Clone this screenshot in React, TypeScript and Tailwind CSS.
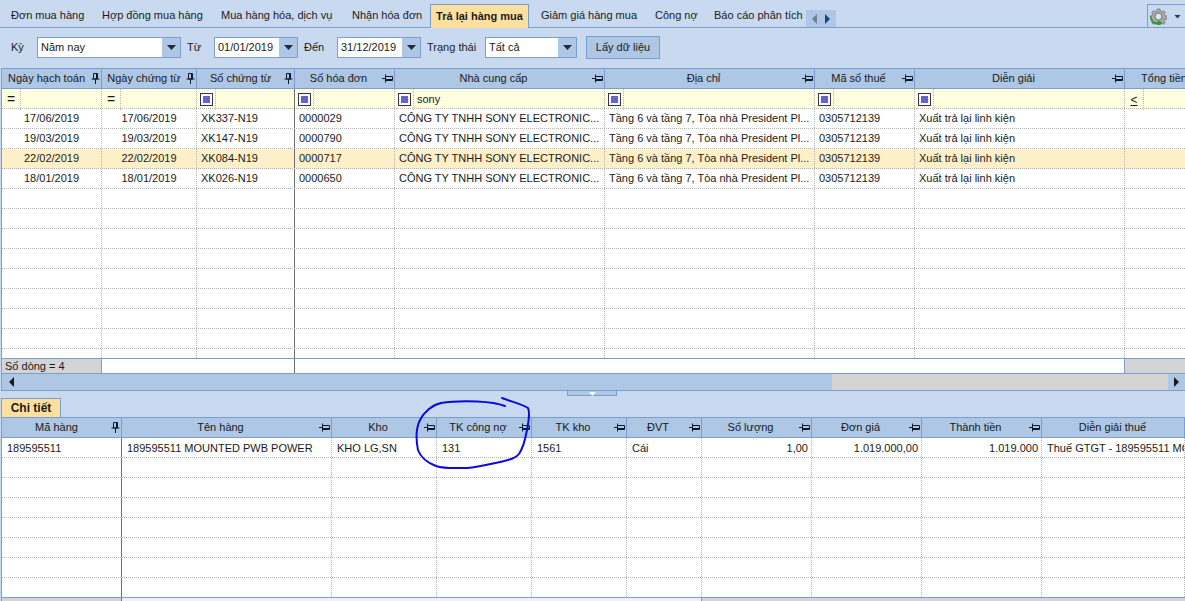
const topCols = [
  { title: "Ngày hạch toán", pin: "v", filter: "=" },
  { title: "Ngày chứng từ", pin: "v", filter: "=" },
  { title: "Số chứng từ", pin: "v", filter: "box" },
  { title: "Số hóa đơn", pin: "h", filter: "box" },
  { title: "Nhà cung cấp", pin: "h", filter: "box", value: "sony" },
  { title: "Địa chỉ", pin: "h", filter: "box" },
  { title: "Mã số thuế", pin: "h", filter: "box" },
  { title: "Diễn giải", pin: "h", filter: "box" },
  { title: "Tổng tiền", pin: "", filter: "le" },
];

const topRows = [
  ["17/06/2019", "17/06/2019", "XK337-N19", "0000029"],
  ["19/03/2019", "19/03/2019", "XK147-N19", "0000790"],
  ["22/02/2019", "22/02/2019", "XK084-N19", "0000717"],
  ["18/01/2019", "18/01/2019", "XK026-N19", "0000650"],
];

const bottomCols = [
  { title: "Mã hàng", pin: "v" },
  { title: "Tên hàng", pin: "h" },
  { title: "Kho", pin: "h" },
  { title: "TK công nợ", pin: "h" },
  { title: "TK kho", pin: "h" },
  { title: "ĐVT", pin: "h" },
  { title: "Số lượng", pin: "h" },
  { title: "Đơn giá", pin: "h" },
  { title: "Thành tiền", pin: "h" },
  { title: "Diễn giải thuế", pin: "" },
];

const bottomRow = [
  "189595511",
  "189595511 MOUNTED PWB POWER",
  "KHO LG,SN",
  "131",
  "1561",
  "Cái",
  "1,00",
  "1.019.000,00",
  "1.019.000",
  "Thuế GTGT - 189595511 MOUNTED PWB POWER",
];

const topGrid = "grid grid-cols-[100px_95px_98px_100px_210px_210px_100px_210px_80px] w-[1223px]";
const bottomGrid = "grid grid-cols-[120px_210px_105px_95px_95px_75px_110px_110px_120px_143px] w-[1183px]";

const Pin = ({ dir }: { dir: string }) => {
  if (dir === "v") {
    return (
      <svg width="9" height="11" viewBox="0 0 9 11" className="shrink-0 text-[#10182c]">
        <path d="M2.500 .5h4v5.500h-4zM.5 6h8M4.500 6v5M5.500 .5v5.500" fill="none" stroke="currentColor" />
      </svg>
    );
  }
  if (dir === "h") {
    return (
      <svg width="11" height="9" viewBox="0 0 11 9" className="shrink-0 text-[#10182c]">
        <path d="M3.500 2.500h7v4h-7zM3.500 .5v8M3.500 4.500h-3.500M3.500 5.500h7" fill="none" stroke="currentColor" />
      </svg>
    );
  }
  return null;
};

const Arrow = ({ dir, className }: { dir: string; className: string }) => (
  <svg width="7" height="10" viewBox="0 0 7 10" className={className}>
    <path d={dir === "left" ? "M6 0v10L1 5z" : "M1 0v10l5-5z"} fill="currentColor" />
  </svg>
);

const Caret = ({ className }: { className: string }) => (
  <svg width="9" height="5" viewBox="0 0 9 5" className={className}>
    <path d="M0 0h9L4.500 5z" fill="currentColor" />
  </svg>
);

const Combo = ({ value, className }: { value: string; className: string }) => (
  <div className={`flex h-[21px] border border-[#7a9fcf] bg-white ${className}`}>
    <div className="flex-1 pl-[3px] leading-[18px] overflow-hidden whitespace-nowrap">{value}</div>
    <div className="w-[18px] bg-[#adc7e5] flex items-center justify-center">
      <Caret className="text-[#1c2a44]" />
    </div>
  </div>
);

const HeaderCell = ({ title, pin }: { title: string; pin: string }) => (
  <div className="flex items-center h-full pr-[1px] border-r border-[#7a9fcf]">
    <span className="flex-1 text-center whitespace-nowrap overflow-hidden">{title}</span>
    <Pin dir={pin} />
  </div>
);

const FilterIcon = ({ kind }: { kind: string }) => {
  const box = "flex items-center justify-center w-[19px] h-full border-r border-dotted border-[#b5b5b5]";
  if (kind === "=") return <span className={`${box} text-[14px]`}>=</span>;
  if (kind === "le") return <span className={`${box} text-[12px] underline`}>&lt;</span>;
  return (
    <span className={box}>
      <span className="w-[13px] h-[13px] border border-[#33335f] bg-white flex items-center justify-center">
        <span className="w-[7px] h-[7px] bg-[#6464cc]" />
      </span>
    </span>
  );
};

const TopRow = ({ cells, hot }: { cells?: string[]; hot?: boolean }) => (
  <div className={`${topGrid} h-[20px] border-b border-dotted border-[#b5b5b5] ${hot ? "bg-[#fdf0c9]" : "bg-white"}`}>
    {topCols.map((c, i) => {
      let text = "";
      if (cells) {
        if (i < 4) text = cells[i];
        if (i === 4) text = "CÔNG TY TNHH SONY ELECTRONIC...";
        if (i === 5) text = "Tầng 6 và tầng 7, Tòa nhà President Pl...";
        if (i === 6) text = "0305712139";
        if (i === 7) text = "Xuất trả lại linh kiện";
      }
      return (
        <div
          key={c.title}
          className={`border-r ${i === 2 ? "border-solid border-[#6f6f6f]" : "border-dotted border-[#b5b5b5]"} leading-[19px] whitespace-nowrap overflow-hidden ${i < 2 ? "text-center" : "pl-[4px]"}`}
        >
          {text}
        </div>
      );
    })}
  </div>
);

const BottomRow = ({ filled }: { filled?: boolean }) => (
  <div className={`${bottomGrid} h-[20px] border-b border-dotted border-[#b5b5b5] bg-white`}>
    {bottomRow.map((text, i) => (
      <div
        key={i}
        className={`border-r ${i === 0 ? "border-solid border-[#6f6f6f]" : "border-dotted border-[#b5b5b5]"} leading-[20px] whitespace-nowrap overflow-hidden ${i >= 6 && i <= 8 ? "text-right pr-[3px]" : "pl-[5px]"}`}
      >
        {filled ? text : ""}
      </div>
    ))}
  </div>
);

export default function App() {
  return (
    <div className="relative w-[1185px] h-[601px] overflow-hidden bg-[#c9daf0] text-[11px] text-[#1a1a1a] font-['Liberation_Sans',sans-serif]">
      {/* tab strip */}
      <div className="flex items-end h-[28px] border-b border-[#7a9fcf]">
        <div className="flex items-center h-[23px] pl-[11px] whitespace-nowrap">
          <span className="w-[91px]">Đơn mua hàng</span>
          <span className="w-[119px]">Hợp đồng mua hàng</span>
          <span className="w-[131px]">Mua hàng hóa, dịch vụ</span>
          <span className="w-[78px]">Nhận hóa đơn</span>
          <span className="flex items-center justify-center w-[99px] h-[24px] -mb-px border border-b-0 border-[#7a9fcf] bg-[#fddf9e] font-bold">
            Trả lại hàng mua
          </span>
          <span className="w-[126px] pl-[12px]">Giảm giá hàng mua</span>
          <span className="w-[59px]">Công nợ</span>
          <span className="w-[92px]">Báo cáo phân tích</span>
        </div>
        <div className="flex items-center justify-around w-[30px] h-[17px] bg-[#adc7e5] px-[2px]">
          <Arrow dir="left" className="text-[#6f7f94]" />
          <Arrow dir="right" className="text-[#1c3f80]" />
        </div>
        <div className="ml-auto flex items-center gap-[6px] w-[38px] h-[23px] pl-[2px] border border-b-0 border-r-0 border-[#7a9fcf]">
          <svg width="17" height="17" viewBox="0 0 17 17">
            <path
              d="M7 1h3l.4 2 1.500.7 1.700-1 1.700 1.700-1 1.700.7 1.500 2 .4v3l-2 .4-.7 1.500 1 1.700-1.700 1.700-1.700-1-1.500.7-.4 1h-3l-.4-1-1.500-.7-1.700 1-1.700-1.700 1-1.700-.7-1.500-2-.4v-3l2-.4.7-1.500-1-1.700 1.700-1.700 1.700 1 1.500-.7z"
              fill="#a8a8a8"
              stroke="#707070"
              strokeWidth=".7"
            />
            <circle cx="8.500" cy="8.500" r="3.500" fill="#dfe7ef" stroke="#707070" />
            <path d="M1 8c-.2 4.500 3 7 7.500 6.500l-.2-1.800 3.700 2.400-3.300 2-.2-1.300C3.500 16.500 0 13.500 1 8z" fill="#24a024" stroke="#24a024" strokeWidth=".8" />
          </svg>
          <Caret className="text-[#1c3f80] scale-75" />
        </div>
      </div>

      {/* filter bar */}
      <div className="flex items-center h-[40px] pl-[11px] pb-[1px] whitespace-nowrap">
        <span className="w-[26px]">Kỳ</span>
        <Combo value="Năm nay" className="w-[144px]" />
        <span className="w-[33px] pl-[6px]">Từ</span>
        <Combo value="01/01/2019" className="w-[84px]" />
        <span className="w-[39px] pl-[6px]">Đến</span>
        <Combo value="31/12/2019" className="w-[84px]" />
        <span className="w-[64px] pl-[6px]">Trạng thái</span>
        <Combo value="Tất cả" className="w-[92px]" />
        <button className="ml-[9px] w-[74px] h-[23px] border border-[#7a9fcf] bg-[#adc7e5]">Lấy dữ liệu</button>
      </div>

      {/* top grid */}
      <div className="ml-[1px] border-l border-t border-[#7a9fcf] overflow-hidden bg-white">
        <div className={`${topGrid} h-[20px] bg-[#adc7e5] border-b border-[#7a9fcf]`}>
          {topCols.map((c) => (
            <HeaderCell key={c.title} title={c.title} pin={c.pin} />
          ))}
        </div>
        <div className={`${topGrid} h-[20px] bg-[#ffffe0] border-b border-dotted border-[#b5b5b5]`}>
          {topCols.map((c, i) => (
            <div
              key={c.title}
              className={`flex items-center border-r ${i === 2 ? "border-solid border-[#6f6f6f]" : "border-dotted border-[#b5b5b5]"}`}
            >
              <FilterIcon kind={c.filter} />
              {c.value && <span className="pl-[3px]">{c.value}</span>}
            </div>
          ))}
        </div>
        <div className="h-[249px] overflow-hidden">
          {topRows.map((r, i) => (
            <TopRow key={r[2]} cells={r} hot={i === 2} />
          ))}
          {[0, 1, 2, 3, 4, 5, 6, 7, 8].map((i) => (
            <TopRow key={i} />
          ))}
        </div>
        {/* summary */}
        <div className={`${topGrid} h-[15px] border-t border-[#7a9fcf]`}>
          <div className="bg-[#d4d4d4] border-r border-[#7a9fcf] pl-[3px] leading-[14px]">Số dòng = 4</div>
          <div />
          <div className="border-r border-[#6f6f6f]" />
          <div className="col-span-5 border-r border-[#7a9fcf]" />
          <div className="bg-[#d4d4d4]" />
        </div>
        {/* scrollbar */}
        <div className="flex h-[18px] border-t border-b border-[#7a9fcf] bg-[#d4d4d4]">
          <div className="flex items-center w-[830px] pl-[6px] bg-[#adc7e5]">
            <Arrow dir="left" className="text-[#1a1a1a]" />
          </div>
          <div className="flex-1" />
          <div className="flex items-center justify-center w-[17px] bg-[#adc7e5]">
            <Arrow dir="right" className="text-[#1a1a1a]" />
          </div>
        </div>
      </div>

      {/* splitter */}
      <div className="flex justify-center h-[7px] pr-[1px]">
        <div className="flex justify-center w-[50px] h-[6px] -mt-px bg-[#adc7e5] border border-[#7a9fcf]">
          <svg width="7" height="4" viewBox="0 0 7 4" className="mt-[1px]">
            <path d="M0 0h7L3.500 4z" fill="#fff" />
          </svg>
        </div>
      </div>

      {/* detail tab */}
      <div className="flex ml-[1px] h-[19px]">
        <div className="w-[60px] border border-b-0 border-[#7a9fcf] bg-[#fddf9e] text-[12px] font-bold text-center leading-[18px]">Chi tiết</div>
      </div>

      {/* bottom grid */}
      <div className="ml-[1px] border-l border-t border-[#7a9fcf] overflow-hidden bg-white">
        <div className={`${bottomGrid} h-[20px] bg-[#adc7e5] border-b border-[#7a9fcf]`}>
          {bottomCols.map((c) => (
            <HeaderCell key={c.title} title={c.title} pin={c.pin} />
          ))}
        </div>
        <BottomRow filled />
        {[0, 1, 2, 3, 4, 5, 6].map((i) => (
          <BottomRow key={i} />
        ))}
        <div className={`${bottomGrid} h-[10px] border-t border-[#7a9fcf] -mt-px`}>
          <div className="bg-[#d4d4d4] border-r border-[#6f6f6f]" />
          <div className="col-span-5 bg-[#f0f0f0] border-r border-[#7a9fcf]" />
          <div className="col-span-4 bg-[#d4d4d4]" />
        </div>
      </div>

      {/* hand drawn circle over the screenshot */}
      <svg width="1185" height="601" viewBox="0 0 1185 601" className="absolute left-0 top-0 pointer-events-none">
        <path
          d="M505 406C497 403 487 402 477 401.500C466 401 453 401 441 403C432 405 424 412 420 420C416 428 416 440 418 450C421 458 428 463 436 466C445 469 455 468 467 468C480 467 490 464 500 462C508 460 515 459 519 454C523 448 525 441 527 430C529 420 530 412 528 408C522 404 512 402 502 398"
          fill="none"
          stroke="#0a0ae0"
          strokeWidth="2"
          strokeLinecap="round"
        />
      </svg>
    </div>
  );
}
